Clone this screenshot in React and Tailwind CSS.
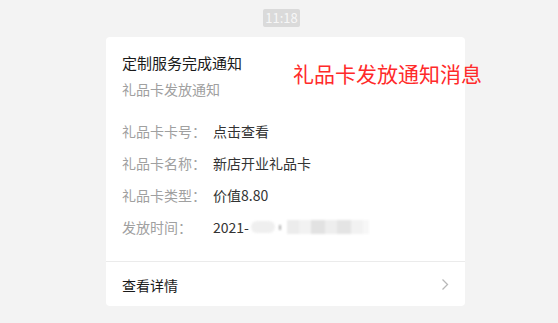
import React from 'react';

// Gift card notification message, WeChat-style template card
const rows = [
    { label: '礼品卡卡号：', value: '点击查看' },
    { label: '礼品卡名称：', value: '新店开业礼品卡' },
    { label: '礼品卡类型：', value: '价值8.80' },
];

function BlurredDate() {
    return (
        <span className="inline-flex items-center">
            <span>2021-</span>
            <span className="ml-[2px] flex h-[14px] items-center blur-[1px]">
                <span className="h-[12px] w-[24px] rounded-full bg-[#efefef]" />
                <span className="ml-[4px] h-[5px] w-[2px] bg-[#b0b0b0]" />
                <span className="ml-[6px] h-[14px] w-[12px] bg-[#ececec]" />
                <span className="h-[14px] w-[12px] bg-[#f2f2f2]" />
                <span className="h-[14px] w-[14px] bg-[#e2e2e2]" />
                <span className="h-[14px] w-[12px] bg-[#eeeeee]" />
                <span className="h-[14px] w-[14px] bg-[#e4e4e4]" />
                <span className="h-[14px] w-[12px] bg-[#f2f2f2]" />
                <span className="h-[14px] w-[6px] bg-[#f7f7f7]" />
            </span>
        </span>
    );
}

export default function App() {
    return (
        <div
            className="h-[323px] w-[558px] bg-[#f3f3f3] pl-[106px]"
            style={{ fontFamily: '"Noto Sans CJK SC", "Noto Sans", sans-serif' }}
        >
            {/* Timestamp badge */}
            <div className="flex w-[359px] pt-[9px]">
                <div className="ml-[157px] flex h-[18px] w-[37px] items-center justify-center rounded-[2px] bg-[#dadada] text-[13px] text-[#f7f7f7]">
                    11:18
                </div>
            </div>

            {/* Card */}
            <div className="relative mt-[10px] w-[359px] rounded-[4px] bg-white">
                <div className="px-[16px] pt-[15px] pb-[24px]">
                    <div className="text-[15px] leading-[22px] text-[#1a1a1a]">定制服务完成通知</div>
                    <div className="mt-[5px] text-[14px] leading-[20px] text-[#a0a0a0]">礼品卡发放通知</div>

                    <div className="mt-[22px] flex flex-col gap-[12px] text-[14px] leading-[20px]">
                        {rows.map(row => (
                            <div key={row.label} className="flex">
                                <span className="w-[91px] text-[#a0a0a0]">{row.label}</span>
                                <span className="text-[#333333]">{row.value}</span>
                            </div>
                        ))}
                        <div className="flex">
                            <span className="w-[91px] text-[#a0a0a0]">发放时间：</span>
                            <span className="text-[#333333]"><BlurredDate /></span>
                        </div>
                    </div>
                </div>

                {/* Footer link */}
                <div className="flex items-center justify-between border-t border-[#ebebeb] pl-[16px] pr-[16px] pt-[13px] pb-[11px]">
                    <span className="text-[14px] leading-[20px] text-[#1a1a1a]">查看详情</span>
                    <svg width="8" height="13" viewBox="0 0 8 13" className="mb-[1px]">
                        <path d="M1.5 1.5 L6.5 6.5 L1.5 11.5" fill="none" stroke="#b8b8b8" strokeWidth="1.3" />
                    </svg>
                </div>

                {/* Red annotation over the card */}
                <div className="absolute left-[187px] top-[23px] whitespace-nowrap text-[21px] leading-[26px] text-[#ff2a2a]">
                    礼品卡发放通知消息
                </div>
            </div>
        </div>
    );
}
